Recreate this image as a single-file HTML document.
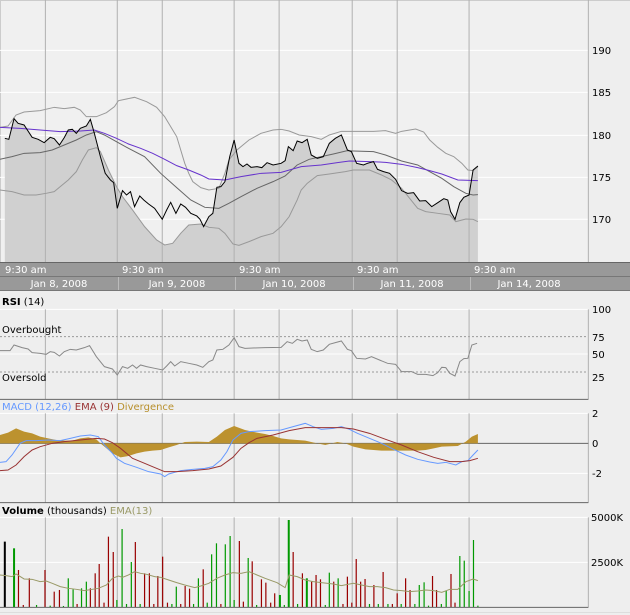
<!DOCTYPE html>
<html><head><meta charset="utf-8"><style>
html,body{margin:0;padding:0;background:#eeeeee;}
body{width:630px;height:615px;overflow:hidden;position:relative;font-family:Verdana,"DejaVu Sans","Liberation Sans",sans-serif;}
svg{position:absolute;left:0;top:0;}
text{font-family:Verdana,"DejaVu Sans","Liberation Sans",sans-serif;font-size:10px;}
</style></head><body>
<svg width="630" height="615" viewBox="0 0 630 615" xmlns="http://www.w3.org/2000/svg">
<rect x="0" y="0" width="630" height="615" fill="#eeeeee"/>
<rect x="0" y="0" width="588" height="262" fill="#f0f0f0"/>
<line x1="0" y1="0.5" x2="630" y2="0.5" stroke="#ccc"/>
<line x1="0.5" y1="0" x2="0.5" y2="262" stroke="#ccc"/>
<!-- main chart -->
<g transform="scale(0.4016,0.3333)" fill="none" stroke-width="1">
<g stroke="#ffffff" vector-effect="non-scaling-stroke">
<line x1="0" y1="151" x2="1465" y2="151" vector-effect="non-scaling-stroke"/>
<line x1="0" y1="277" x2="1465" y2="277" vector-effect="non-scaling-stroke"/>
<line x1="0" y1="406" x2="1465" y2="406" vector-effect="non-scaling-stroke"/>
<line x1="0" y1="532" x2="1465" y2="532" vector-effect="non-scaling-stroke"/>
<line x1="0" y1="658" x2="1465" y2="658" vector-effect="non-scaling-stroke"/>
</g>
<polygon fill="#d0d0d0" stroke="none" points="12,786 12,415 22,418 35,356 45,370 60,375 80,412 95,418 110,428 125,412 135,416 148,435 160,413 170,390 180,388 190,400 200,385 215,378 225,358 235,400 245,452 250,455 270,510 290,560 305,590 330,630 360,680 390,720 410,735 430,730 450,700 470,675 500,672 507,680 520,650 530,640 540,562 550,560 560,545 572,470 583,420 595,490 605,500 615,492 625,502 640,500 652,503 665,488 680,495 700,490 710,482 718,440 730,452 740,423 752,428 765,418 775,465 790,475 805,470 820,430 835,415 850,405 865,450 875,455 888,490 905,495 915,490 930,485 940,508 955,515 970,520 985,538 1000,572 1015,580 1030,578 1045,603 1060,602 1075,620 1090,608 1105,596 1115,600 1122,635 1133,658 1145,608 1155,592 1168,585 1178,510 1190,498 1190,786"/>
<g stroke="#b0b0b0">
<line x1="113" y1="0" x2="113" y2="786" vector-effect="non-scaling-stroke"/>
<line x1="292" y1="0" x2="292" y2="786" vector-effect="non-scaling-stroke"/>
<line x1="404" y1="0" x2="404" y2="786" vector-effect="non-scaling-stroke"/>
<line x1="583" y1="0" x2="583" y2="786" vector-effect="non-scaling-stroke"/>
<line x1="695" y1="0" x2="695" y2="786" vector-effect="non-scaling-stroke"/>
<line x1="877" y1="0" x2="877" y2="786" vector-effect="non-scaling-stroke"/>
<line x1="989" y1="0" x2="989" y2="786" vector-effect="non-scaling-stroke"/>
<line x1="1168" y1="0" x2="1168" y2="786" vector-effect="non-scaling-stroke"/>
<line x1="1465" y1="0" x2="1465" y2="786" vector-effect="non-scaling-stroke"/>
</g>
<polyline stroke="#999999" vector-effect="non-scaling-stroke" points="0,382 20,378 40,345 60,336 100,332 135,322 160,326 185,322 200,330 215,350 240,350 265,338 285,320 295,302 335,292 365,305 390,322 410,350 425,380 440,410 450,450 460,490 470,520 480,545 500,563 520,570 545,565 560,520 570,480 590,450 620,420 650,400 680,390 700,388 720,393 745,405 775,410 800,418 820,405 850,394 880,394 930,394 960,392 985,400 1000,394 1035,387 1055,396 1070,420 1090,442 1110,460 1130,470 1150,490 1165,510 1178,512 1190,500"/>
<polyline stroke="#999999" vector-effect="non-scaling-stroke" points="0,570 30,575 60,585 90,585 115,580 135,575 150,560 170,540 190,515 205,480 220,450 240,443 250,455 270,510 290,560 305,590 330,630 360,680 390,720 410,735 430,730 450,700 470,675 500,672 520,682 545,685 560,700 580,732 595,736 620,725 650,710 680,700 700,680 720,650 740,600 750,570 765,550 790,527 820,522 860,515 880,510 920,510 950,525 975,540 1000,565 1020,595 1040,625 1060,635 1090,640 1120,645 1135,665 1160,657 1178,658 1190,665"/>
<polyline stroke="#666666" vector-effect="non-scaling-stroke" points="0,478 30,470 60,460 100,458 130,450 160,435 190,420 215,405 240,395 260,405 290,425 320,445 360,470 400,520 440,563 475,600 510,622 545,625 570,610 600,590 640,565 680,545 710,528 740,495 770,478 800,470 830,462 865,452 880,453 930,455 960,465 1000,483 1040,495 1070,515 1100,535 1130,560 1160,580 1178,585 1190,584"/>
<polyline stroke="#6633cc" vector-effect="non-scaling-stroke" points="0,382 50,385 100,390 150,395 200,393 235,390 260,400 290,415 320,432 350,445 380,460 410,478 440,497 470,510 500,525 520,537 560,540 600,530 650,520 700,517 750,500 800,495 840,488 870,483 920,485 960,487 1000,493 1040,503 1070,512 1100,522 1140,540 1190,542"/>
<polyline stroke="#000000" vector-effect="non-scaling-stroke" points="12,415 22,418 35,356 45,370 60,375 80,412 95,418 110,428 125,412 135,416 148,435 160,413 170,390 180,388 190,400 200,385 215,378 225,358 235,400 250,470 262,520 275,540 283,548 292,625 305,572 315,585 325,575 335,620 348,588 358,600 370,612 385,625 404,658 415,630 425,607 438,640 450,612 462,622 475,640 490,648 498,658 507,680 520,650 530,640 540,562 550,560 560,545 572,470 583,420 595,490 605,500 615,492 625,502 640,500 652,503 665,488 680,495 700,490 710,482 718,440 730,452 740,423 752,428 765,418 775,465 790,475 805,470 820,430 835,415 850,405 865,450 875,455 888,490 905,495 915,490 930,485 940,508 955,515 970,520 985,538 1000,572 1015,580 1030,578 1045,603 1060,602 1075,620 1090,608 1105,596 1115,600 1122,635 1133,658 1145,608 1155,592 1168,585 1178,510 1190,498"/>
</g>
<g fill="#000">
<text x="592" y="54">190</text>
<text x="592" y="96">185</text>
<text x="592" y="139">180</text>
<text x="592" y="181">175</text>
<text x="592" y="223">170</text>
</g>
<!-- axis band -->
<rect x="0" y="262" width="630" height="29" fill="#999999"/>
<line x1="0" y1="262.5" x2="630" y2="262.5" stroke="#666"/>
<line x1="0" y1="276.5" x2="630" y2="276.5" stroke="#777"/>
<line x1="0" y1="290.5" x2="630" y2="290.5" stroke="#777"/>
<g stroke="#bbbbbb">
<line x1="118.5" y1="277" x2="118.5" y2="290"/><line x1="235.5" y1="277" x2="235.5" y2="290"/><line x1="353.5" y1="277" x2="353.5" y2="290"/><line x1="470.5" y1="277" x2="470.5" y2="290"/>
</g>
<g fill="#ffffff">
<text x="5" y="273">9:30 am</text><text x="122" y="273">9:30 am</text><text x="239" y="273">9:30 am</text><text x="357" y="273">9:30 am</text><text x="474" y="273">9:30 am</text>
<text x="59" y="287" text-anchor="middle">Jan 8, 2008</text><text x="177" y="287" text-anchor="middle">Jan 9, 2008</text><text x="294" y="287" text-anchor="middle">Jan 10, 2008</text><text x="412" y="287" text-anchor="middle">Jan 11, 2008</text><text x="529" y="287" text-anchor="middle">Jan 14, 2008</text>
</g>
<!-- RSI -->
<text x="2" y="305"><tspan font-weight="bold">RSI</tspan> (14)</text>
<g transform="translate(0,250) scale(0.4016,0.3333)" fill="none">
<line x1="0" y1="178" x2="1465" y2="178" stroke="#fff" vector-effect="non-scaling-stroke"/>
<line x1="0" y1="312" x2="1465" y2="312" stroke="#fff" vector-effect="non-scaling-stroke"/>
<line x1="0" y1="260" x2="1465" y2="260" stroke="#999" stroke-dasharray="2 2" vector-effect="non-scaling-stroke"/>
<line x1="0" y1="366" x2="1465" y2="366" stroke="#999" stroke-dasharray="2 2" vector-effect="non-scaling-stroke"/>
<g stroke="#b0b0b0">
<line x1="113" y1="178" x2="113" y2="448" vector-effect="non-scaling-stroke"/><line x1="292" y1="178" x2="292" y2="448" vector-effect="non-scaling-stroke"/><line x1="404" y1="178" x2="404" y2="448" vector-effect="non-scaling-stroke"/><line x1="583" y1="178" x2="583" y2="448" vector-effect="non-scaling-stroke"/><line x1="695" y1="178" x2="695" y2="448" vector-effect="non-scaling-stroke"/><line x1="877" y1="178" x2="877" y2="448" vector-effect="non-scaling-stroke"/><line x1="989" y1="178" x2="989" y2="448" vector-effect="non-scaling-stroke"/><line x1="1168" y1="178" x2="1168" y2="448" vector-effect="non-scaling-stroke"/><line x1="1465" y1="178" x2="1465" y2="448" vector-effect="non-scaling-stroke"/>
</g>
<line x1="0" y1="448" x2="1465" y2="448" stroke="#666" vector-effect="non-scaling-stroke"/>
<polyline stroke="#888888" vector-effect="non-scaling-stroke" points="0,302 25,302 35,285 55,293 70,297 80,308 100,310 115,313 125,305 135,307 148,318 160,305 175,298 190,300 210,293 223,287 240,320 260,350 280,357 292,375 305,350 318,355 330,345 340,355 350,345 365,350 385,355 405,360 415,348 425,335 435,348 450,335 470,340 490,345 505,352 520,335 530,330 540,300 555,298 570,285 583,263 595,290 610,295 630,294 660,293 700,292 715,275 728,280 740,268 752,273 765,270 775,298 790,305 805,300 820,283 835,278 850,273 865,298 875,302 888,325 910,327 925,320 945,330 965,340 985,343 1000,365 1025,365 1040,373 1060,373 1078,377 1090,368 1100,352 1110,353 1120,370 1133,378 1145,335 1155,326 1165,325 1175,285 1188,280"/>
</g>
<g fill="#000"><text x="2" y="333">Overbought</text><text x="2" y="381">Oversold</text>
<text x="592" y="313">100</text><text x="592" y="341">75</text><text x="592" y="358">50</text><text x="592" y="381">25</text></g>
<!-- MACD -->
<text x="2" y="410"><tspan fill="#6699ff">MACD (12,26)</tspan> <tspan fill="#993333">EMA (9)</tspan> <tspan fill="#b8902d">Divergence</tspan></text>
<g transform="translate(0,400) scale(0.4016,0.3333)" fill="none">
<line x1="0" y1="40" x2="1465" y2="40" stroke="#fff" vector-effect="non-scaling-stroke"/>
<line x1="0" y1="220" x2="1465" y2="220" stroke="#fff" vector-effect="non-scaling-stroke"/>
<g stroke="#b0b0b0">
<line x1="113" y1="40" x2="113" y2="308" vector-effect="non-scaling-stroke"/><line x1="292" y1="40" x2="292" y2="308" vector-effect="non-scaling-stroke"/><line x1="404" y1="40" x2="404" y2="308" vector-effect="non-scaling-stroke"/><line x1="583" y1="40" x2="583" y2="308" vector-effect="non-scaling-stroke"/><line x1="695" y1="40" x2="695" y2="308" vector-effect="non-scaling-stroke"/><line x1="877" y1="40" x2="877" y2="308" vector-effect="non-scaling-stroke"/><line x1="989" y1="40" x2="989" y2="308" vector-effect="non-scaling-stroke"/><line x1="1168" y1="40" x2="1168" y2="308" vector-effect="non-scaling-stroke"/><line x1="1465" y1="40" x2="1465" y2="308" vector-effect="non-scaling-stroke"/>
</g>
<line x1="0" y1="130" x2="1465" y2="130" stroke="#666" vector-effect="non-scaling-stroke"/>
<polygon fill="#bc922f" stroke="none" points="0,130 0,105 20,98 40,85 60,95 80,100 100,110 120,115 140,120 160,122 180,122 200,115 220,112 240,118 250,130 260,140 280,160 300,172 320,168 340,160 360,155 380,152 400,150 420,142 440,135 460,126 490,125 520,126 540,110 560,90 583,78 610,90 640,98 660,102 680,108 700,115 720,118 760,122 790,130 810,135 840,126 860,130 880,140 910,148 950,152 990,152 1020,152 1040,152 1060,150 1080,145 1100,140 1140,138 1160,125 1175,110 1190,102 1190,130"/>
<polyline stroke="#6699ff" vector-effect="non-scaling-stroke" points="0,187 15,185 30,165 50,130 65,122 90,122 120,120 150,122 175,115 200,108 225,105 245,110 260,135 280,160 290,175 310,190 340,202 370,215 400,222 410,230 420,222 450,212 480,208 510,205 530,200 550,180 565,155 580,120 600,100 620,95 660,92 700,90 730,80 760,70 780,80 800,88 830,85 850,80 870,88 890,100 920,115 950,130 980,148 1010,165 1040,178 1070,186 1090,190 1110,187 1135,195 1150,185 1165,182 1178,165 1190,150"/>
<polyline stroke="#993333" vector-effect="non-scaling-stroke" points="0,212 20,210 40,195 60,170 80,150 100,140 130,130 160,125 200,120 240,115 260,117 280,128 300,145 330,175 360,190 380,200 410,215 440,215 480,212 520,207 550,198 580,172 600,145 620,128 640,115 680,105 720,92 760,83 800,83 850,83 880,87 920,100 960,118 1000,135 1040,155 1080,172 1120,185 1150,185 1170,182 1190,175"/>
<line x1="0" y1="308" x2="1465" y2="308" stroke="#666" vector-effect="non-scaling-stroke"/>
</g>
<g fill="#000"><text x="592" y="417">2</text><text x="592" y="447">0</text><text x="592" y="477">-2</text></g>
<!-- Volume -->
<text x="2" y="514"><tspan font-weight="bold">Volume</tspan> (thousands) <tspan fill="#999966">EMA(13)</tspan></text>
<g transform="translate(0,400) scale(0.4016,0.3333)" fill="none">
<line x1="0" y1="352" x2="1465" y2="352" stroke="#fff" vector-effect="non-scaling-stroke"/>
<line x1="0" y1="487" x2="1465" y2="487" stroke="#fff" vector-effect="non-scaling-stroke"/>
<g stroke="#b0b0b0">
<line x1="113" y1="352" x2="113" y2="622" vector-effect="non-scaling-stroke"/><line x1="292" y1="352" x2="292" y2="622" vector-effect="non-scaling-stroke"/><line x1="404" y1="352" x2="404" y2="622" vector-effect="non-scaling-stroke"/><line x1="583" y1="352" x2="583" y2="622" vector-effect="non-scaling-stroke"/><line x1="695" y1="352" x2="695" y2="622" vector-effect="non-scaling-stroke"/><line x1="877" y1="352" x2="877" y2="622" vector-effect="non-scaling-stroke"/><line x1="989" y1="352" x2="989" y2="622" vector-effect="non-scaling-stroke"/><line x1="1168" y1="352" x2="1168" y2="622" vector-effect="non-scaling-stroke"/><line x1="1465" y1="352" x2="1465" y2="622" vector-effect="non-scaling-stroke"/>
</g>
<line x1="12" y1="622" x2="12" y2="425" stroke="#000" stroke-width="5"/>
<g stroke="#990000" stroke-width="3">
<line x1="46" y1="622" x2="46" y2="510"/><line x1="58" y1="622" x2="58" y2="615"/><line x1="73" y1="622" x2="73" y2="535"/><line x1="112" y1="622" x2="112" y2="510"/><line x1="135" y1="622" x2="135" y2="575"/><line x1="148" y1="622" x2="148" y2="570"/><line x1="192" y1="622" x2="192" y2="612"/><line x1="225" y1="622" x2="225" y2="565"/><line x1="237" y1="622" x2="237" y2="520"/><line x1="247" y1="622" x2="247" y2="492"/><line x1="259" y1="622" x2="259" y2="608"/><line x1="270" y1="622" x2="270" y2="410"/><line x1="282" y1="622" x2="282" y2="456"/><line x1="337" y1="622" x2="337" y2="426"/><line x1="360" y1="622" x2="360" y2="520"/><line x1="372" y1="622" x2="372" y2="520"/><line x1="383" y1="622" x2="383" y2="612"/><line x1="393" y1="622" x2="393" y2="528"/><line x1="405" y1="622" x2="405" y2="470"/><line x1="417" y1="622" x2="417" y2="608"/><line x1="450" y1="622" x2="450" y2="612"/><line x1="461" y1="622" x2="461" y2="558"/><line x1="472" y1="622" x2="472" y2="566"/><line x1="506" y1="622" x2="506" y2="508"/><line x1="550" y1="622" x2="550" y2="612"/><line x1="596" y1="622" x2="596" y2="423"/><line x1="606" y1="622" x2="606" y2="605"/><line x1="628" y1="622" x2="628" y2="484"/><line x1="651" y1="622" x2="651" y2="538"/><line x1="662" y1="622" x2="662" y2="548"/><line x1="674" y1="622" x2="674" y2="608"/><line x1="684" y1="622" x2="684" y2="580"/><line x1="730" y1="622" x2="730" y2="456"/><line x1="753" y1="622" x2="753" y2="520"/><line x1="776" y1="622" x2="776" y2="545"/><line x1="787" y1="622" x2="787" y2="525"/><line x1="798" y1="622" x2="798" y2="538"/><line x1="831" y1="622" x2="831" y2="545"/><line x1="854" y1="622" x2="854" y2="612"/><line x1="865" y1="622" x2="865" y2="530"/><line x1="876" y1="622" x2="876" y2="608"/><line x1="887" y1="622" x2="887" y2="477"/><line x1="898" y1="622" x2="898" y2="545"/><line x1="909" y1="622" x2="909" y2="537"/><line x1="931" y1="622" x2="931" y2="555"/><line x1="954" y1="622" x2="954" y2="516"/><line x1="977" y1="622" x2="977" y2="612"/><line x1="989" y1="622" x2="989" y2="580"/><line x1="1010" y1="622" x2="1010" y2="535"/><line x1="1021" y1="622" x2="1021" y2="570"/><line x1="1077" y1="622" x2="1077" y2="528"/><line x1="1087" y1="622" x2="1087" y2="570"/><line x1="1123" y1="622" x2="1123" y2="522"/><line x1="1133" y1="622" x2="1133" y2="608"/>
</g>
<g stroke="#009900" stroke-width="3">
<line x1="35" y1="622" x2="35" y2="445" stroke-width="5"/><line x1="91" y1="622" x2="91" y2="615"/><line x1="125" y1="622" x2="125" y2="617"/><line x1="158" y1="622" x2="158" y2="618"/><line x1="170" y1="622" x2="170" y2="535"/><line x1="182" y1="622" x2="182" y2="568"/><line x1="203" y1="622" x2="203" y2="565"/><line x1="215" y1="622" x2="215" y2="545"/><line x1="291" y1="622" x2="291" y2="600"/><line x1="304" y1="622" x2="304" y2="387"/><line x1="315" y1="622" x2="315" y2="612"/><line x1="327" y1="622" x2="327" y2="486"/><line x1="349" y1="622" x2="349" y2="612"/><line x1="428" y1="622" x2="428" y2="612"/><line x1="439" y1="622" x2="439" y2="560"/><line x1="482" y1="622" x2="482" y2="612"/><line x1="494" y1="622" x2="494" y2="535"/><line x1="516" y1="622" x2="516" y2="608"/><line x1="527" y1="622" x2="527" y2="463"/><line x1="539" y1="622" x2="539" y2="430"/><line x1="561" y1="622" x2="561" y2="433"/><line x1="573" y1="622" x2="573" y2="408"/><line x1="583" y1="622" x2="583" y2="600"/><line x1="618" y1="622" x2="618" y2="474"/><line x1="639" y1="622" x2="639" y2="615"/><line x1="697" y1="622" x2="697" y2="585" stroke-width="5"/><line x1="708" y1="622" x2="708" y2="615"/><line x1="719" y1="622" x2="719" y2="360" stroke-width="5"/><line x1="741" y1="622" x2="741" y2="612"/><line x1="764" y1="622" x2="764" y2="535" stroke-width="5"/><line x1="810" y1="622" x2="810" y2="615"/><line x1="820" y1="622" x2="820" y2="518"/><line x1="842" y1="622" x2="842" y2="535"/><line x1="920" y1="622" x2="920" y2="612"/><line x1="942" y1="622" x2="942" y2="612"/><line x1="966" y1="622" x2="966" y2="612"/><line x1="999" y1="622" x2="999" y2="612"/><line x1="1033" y1="622" x2="1033" y2="612"/><line x1="1044" y1="622" x2="1044" y2="555"/><line x1="1056" y1="622" x2="1056" y2="547"/><line x1="1067" y1="622" x2="1067" y2="617"/><line x1="1099" y1="622" x2="1099" y2="612"/><line x1="1111" y1="622" x2="1111" y2="573"/><line x1="1145" y1="622" x2="1145" y2="468"/><line x1="1156" y1="622" x2="1156" y2="482"/><line x1="1168" y1="622" x2="1168" y2="573"/><line x1="1179" y1="622" x2="1179" y2="420"/><line x1="1190" y1="622" x2="1190" y2="617"/>
</g>
<polyline stroke="#999966" vector-effect="non-scaling-stroke" points="0,525 15,527 30,530 40,522 60,537 80,538 100,545 115,543 130,550 150,560 170,565 190,568 210,572 230,568 245,565 265,555 280,535 295,528 305,532 320,525 335,515 350,520 365,523 385,530 400,532 420,540 440,548 460,555 485,563 500,558 520,550 540,535 560,525 580,518 600,520 620,515 640,525 660,535 690,548 710,563 720,525 740,530 760,540 780,545 800,548 830,552 850,557 880,550 900,555 920,560 940,560 960,563 980,570 1000,572 1020,575 1040,573 1060,570 1080,572 1100,577 1120,568 1140,568 1160,545 1178,537 1190,542"/>
<line x1="0" y1="622" x2="1465" y2="622" stroke="#666" vector-effect="non-scaling-stroke"/>
</g>
<line x1="0" y1="612.5" x2="630" y2="612.5" stroke="#dddddd"/>
<g fill="#000"><text x="591" y="521">5000K</text><text x="591" y="566">2500K</text></g>
</svg>
</body></html>
